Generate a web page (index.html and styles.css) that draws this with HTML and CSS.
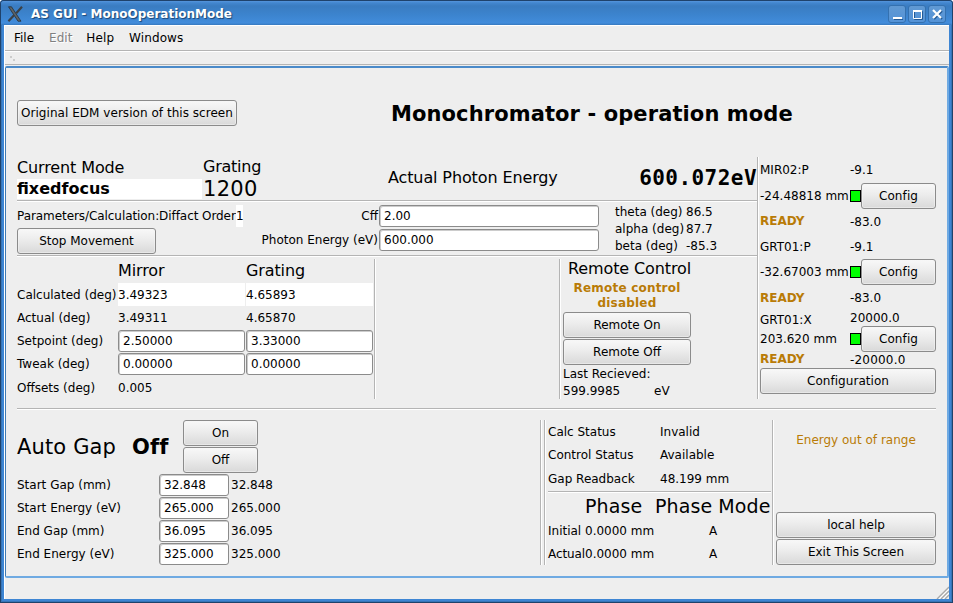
FILE: index.html
```html
<!DOCTYPE html>
<html lang="en">
<head>
<meta charset="utf-8">
<title>AS GUI - MonoOperationMode</title>
<link rel="stylesheet" href="styles.css">
</head>
<body>
<div class="window">
  <header class="titlebar">
    <svg class="logo" viewBox="0 0 16 16"><path d="M1.500 .8 4.500.8 14 15.200 11 15.200Z" fill="#5d6468" stroke="#20272c" stroke-width=".7"/><path d="M15 .8 9.200 7.200M7 9.300 1.400 15.200" stroke="#3c4146" stroke-width="2.200"/></svg>
    <span class="caption">AS GUI - MonoOperationMode</span>
    <div class="winbtns">
      <svg viewBox="1 1 16 16"><path d="M6 14.500h9" stroke="#235a95" stroke-width="1"/><path d="M5 13h9" stroke="#fff" stroke-width="2"/></svg>
      <svg viewBox="1 1 16 16"><path d="M6.500 6.500h8v8h-8z" fill="none" stroke="#235a95"/><path d="M5.500 5.500h8v8h-8z" fill="none" stroke="#fff"/><path d="M5 6h9" stroke="#fff" stroke-width="2"/></svg>
      <svg viewBox="1 1 16 16"><path d="m6 6 8 8m0-8-8 8" stroke="#235a95" stroke-width="2"/><path d="m5 5 8 8m0-8-8 8" stroke="#fff" stroke-width="2.200"/></svg>
    </div>
  </header>
  <div class="client">
    <nav class="menu"><span>File</span><span class="off">Edit</span><span class="help">Help</span><span class="wins">Windows</span></nav>
    <div class="toolbar"><i></i><i></i></div>
    <main class="panel">
      <section class="head">
        <button class="edm">Original EDM version of this screen</button>
        <h1>Monochromator - operation mode</h1>
      </section>
      <section class="upper">
        <div class="left">
          <div class="mode">
            <div class="cur"><span class="mid">Current Mode</span><strong>fixedfocus</strong></div>
            <div class="grat"><span class="mid">Grating</span><span class="big">1200</span></div>
            <span class="mid ape">Actual Photon Energy</span>
            <span class="energy">600.072eV</span>
          </div>
          <hr>
          <div class="params">
            <div class="order">
              <div class="line"><span class="pc">Parameters/Calculation:Diffact Order</span><span class="one">1</span></div>
              <button>Stop Movement</button>
            </div>
            <div class="entry">
              <span>Cff</span><div class="field">2.00</div>
              <span>Photon Energy (eV)</span><div class="field">600.000</div>
            </div>
            <div class="angles">
              <span>theta (deg)</span><span>86.5</span>
              <span>alpha (deg)</span><span>87.7</span>
              <span>beta (deg)</span><span>-85.3</span>
            </div>
          </div>
          <hr>
          <div class="lowerleft">
            <div class="table">
              <span></span><span class="mid">Mirror</span><span class="mid">Grating</span>
              <span>Calculated (deg)</span><span class="white">3.49323</span><span class="white">4.65893</span>
              <span>Actual (deg)</span><span>3.49311</span><span>4.65870</span>
              <span>Setpoint (deg)</span><div class="field">2.50000</div><div class="field">3.33000</div>
              <span>Tweak (deg)</span><div class="field">0.00000</div><div class="field">0.00000</div>
              <span class="offset">Offsets (deg)</span><span class="offset">0.005</span>
            </div>
            <div class="vr"></div>
            <div class="vr second"></div>
            <div class="remote">
              <span class="mid">Remote Control</span>
              <strong class="amber">Remote control<br>disabled</strong>
              <button>Remote On</button>
              <button>Remote Off</button>
              <span class="last">Last Recieved:</span>
              <div class="recv"><span>599.9985</span><span>eV</span></div>
            </div>
          </div>
        </div>
        <div class="vr"></div>
        <div class="motors">
          <div class="motor">
            <span>MIR02:P</span><span>-9.1</span>
            <span>-24.48818 mm</span><div class="cfg"><i></i><button>Config</button></div>
            <strong class="amber">READY</strong><span>-83.0</span>
          </div>
          <div class="motor tight">
            <span>GRT01:P</span><span>-9.1</span>
            <span>-32.67003 mm</span><div class="cfg"><i></i><button>Config</button></div>
            <strong class="amber">READY</strong><span>-83.0</span>
          </div>
          <div class="motor compact">
            <span>GRT01:X</span><span class="lim">20000.0</span>
            <span>203.620 mm</span><div class="cfg"><i></i><button>Config</button></div>
            <strong class="amber">READY</strong><span class="low">-20000.0</span>
          </div>
          <button>Configuration</button>
        </div>
      </section>
      <hr class="divider">
      <section class="bottom">
        <div class="gap">
          <div class="auto">
            <span class="big">Auto Gap</span><strong class="big">Off</strong>
            <div class="onoff"><button>On</button><button>Off</button></div>
          </div>
          <div class="gaps">
            <span>Start Gap (mm)</span><div class="field">32.848</div><span>32.848</span>
            <span>Start Energy (eV)</span><div class="field">265.000</div><span>265.000</span>
            <span>End Gap (mm)</span><div class="field">36.095</div><span>36.095</span>
            <span>End Energy (eV)</span><div class="field">325.000</div><span>325.000</span>
          </div>
        </div>
        <div class="vr"></div>
        <div class="vr"></div>
        <div class="status">
          <div class="calc">
            <span>Calc Status</span><span>Invalid</span>
            <span>Control Status</span><span>Available</span>
            <span>Gap Readback</span><span>48.199 mm</span>
          </div>
          <hr>
          <div class="phase">
            <span></span><span class="ph">Phase</span><span class="ph">Phase Mode</span>
            <span>Initial</span><span>0.0000 mm</span><span class="a">A</span>
            <span class="act">Actual</span><span>0.0000 mm</span><span class="a">A</span>
          </div>
        </div>
        <div class="vr"></div>
        <div class="actions">
          <span class="amber">Energy out of range</span>
          <button>local help</button>
          <button>Exit This Screen</button>
        </div>
      </section>
    </main>
    <footer><svg viewBox="0 0 13 13"><path d="M1 13 13 1M5 13l8-8M9 13l4-4" stroke="#a8a8a8" stroke-width="1.300"/><path d="M3 13 13 3M7 13l6-6" stroke="#fff"/></svg></footer>
  </div>
</div>
</body>
</html>
```
FILE: styles.css
```css
* { box-sizing: border-box; }
body { margin: 0; background: #fff; font: 12px/16px "DejaVu Sans", sans-serif; color: #000; white-space: nowrap; }
.window { width: 953px; height: 603px; display: flex; flex-direction: column; padding: 1px 4px 4px 4px; border-radius: 4px 4px 0 0; background: #3d85d3; box-shadow: inset 0 0 0 1px #1f426b, inset 0 0 0 2px #3775b7; }
.titlebar { height: 24px; margin: 0 -3px; padding: 1px 6px 0 6px; display: flex; align-items: center; background: linear-gradient(#5595dc 0, #4286ce 2px, #3a7cc1 5px, #3c84ce 14px, #428cdb 22px, #3778bd 24px); border-radius: 3px 3px 0 0; }
.logo { width: 16px; height: 16px; margin-right: 8px; }
.caption { font-weight: bold; color: #fff; text-shadow: 1px 1px 1px #1b4473; flex: 1; padding-top: 1px; }
.winbtns { display: flex; gap: 2px; }
.winbtns svg { width: 18px; height: 18px; border: 1px solid #3471b0; border-radius: 3px; background: linear-gradient(#6099d3, #5493d7); }
.client { flex: 1; display: flex; flex-direction: column; background: #eee; border: solid #fff; border-width: 1px 0 0 1px; }
.menu { height: 24px; display: flex; gap: 15px; padding: 3px 0 0 9px; line-height: 18px; }
.help { margin-left: -1px; letter-spacing: .1px; }
.wins { letter-spacing: .1px; }
.off { color: #808080; text-shadow: 1px 1px #fff; }
.toolbar { height: 15px; border-top: 1px solid #b4b4b4; border-bottom: 1px solid #b4b4b4; box-shadow: inset 0 1px #fff; padding: 5px 0 0 5px; display: flex; gap: 1px; }
.toolbar i { width: 2px; height: 2px; background: #ccc; }
.toolbar i + i { margin-top: 3px; }
.panel { height: 512px; border: solid; border-width: 2px 2px 2px 1px; border-color: #4a8ac9 #6faae2 #6faae2 #4079b1; margin-top: 1px; padding: 0 10px 0 11px; border-radius: 2px; }
button { font: inherit; line-height: 16px; height: 26px; padding: 0; border: 1px solid #8b8b8b; border-radius: 3px; background: linear-gradient(#f8f8f8, #ececec 45%, #d9d9d9); box-shadow: inset 0 0 0 1px #f5f5f580; color: #000; text-align: center; }
.field { height: 22px; border: 1px solid #8b8b8b; border-radius: 3px; background: #fff; padding-left: 4px; line-height: 20px; box-shadow: inset 1px 1px #ccc; }
hr { margin: 0; border: 0; height: 2px; background: linear-gradient(#b4b4b4 50%, #fff 50%); }
.vr { width: 2px; background: linear-gradient(90deg, #b4b4b4 50%, #fff 50%); }
.mid { font-size: 16px; letter-spacing: -.12px; }
.big { font-size: 21px; letter-spacing: .15px; }
.amber { color: #b97b06; }
.head { height: 89px; display: flex; align-items: center; }
.edm { width: 220px; margin-right: 154px; letter-spacing: .04px; }
h1 { margin: 0; padding-top: 2px; font-size: 21px; line-height: 26px; letter-spacing: .1px; }
.upper { display: flex; height: 242px; width: 919px; }
.left { width: 740px; }
.mode { height: 43px; display: flex; }
.cur { width: 186px; }
.cur span, .grat span { display: block; height: 22px; line-height: 22px; }
.grat .mid { line-height: 20px; letter-spacing: -.25px; }
.grat .big { line-height: 21px; letter-spacing: .3px; }
.cur strong { display: block; width: 185px; height: 20px; line-height: 19px; font-size: 16px; background: #fff; }
.grat { width: 185px; }
.ape { line-height: 42px; }
.energy { margin-left: auto; font: bold 21px/42px "DejaVu Sans Mono", monospace; letter-spacing: .45px; }
.params { height: 53px; display: flex; padding-top: 3px; }
.order { width: 244px; }
.line { display: flex; line-height: 22px; height: 23px; }
.pc { width: 219px; letter-spacing: -.07px; }
.one { background: #fff; width: 7px; height: 22px; }
.order button { width: 139px; }
.entry { display: grid; grid-template-columns: 118px 220px; grid-auto-rows: 22px; gap: 2px 0; line-height: 22px; width: 354px; text-align: right; }
.entry span { padding-right: 1px; }
.entry .field { text-align: left; }
.angles { display: grid; grid-template-columns: 71px 50px; grid-auto-rows: 17px; line-height: 14px; }
.lowerleft { display: flex; height: 142px; }
.table { width: 356px; display: grid; grid-template-columns: 101px 128px 127px; grid-template-rows: 26px; grid-auto-rows: 23px; line-height: 24px; margin-right: 1px; }
.table .mid { line-height: 28px; }
.table .white { background: #fff; width: 127px; }
.table .field { width: 127px; margin-top: 1px; }
.table .offset { line-height: 27px; }
.lowerleft .vr { margin-top: 2px; }
.second { margin-left: 183px; }
.remote { margin-left: 2px; width: 128px; display: flex; flex-direction: column; }
.remote > * { flex-shrink: 0; }
.remote .mid { height: 23px; line-height: 24px; padding-left: 5px; }
.remote strong { height: 32px; line-height: 15px; padding-top: 1px; text-align: center; letter-spacing: .2px; }
.remote button { margin-bottom: 1px; }
.last { line-height: 17px; }
.recv { display: flex; line-height: 17px; }
.recv span:first-child { width: 91px; }
.motors { width: 177px; padding-left: 1px; }
.motor { display: grid; grid-template-columns: 90px 87px; grid-template-rows: 26px 26px 25px; line-height: 26px; }
.motor .amber { line-height: 25px; }
.tight { grid-template-rows: 25px 26px 26px; }
.tight .amber { line-height: 26px; }
.compact { grid-template-rows: 15px 26px 16px; line-height: 18px; }
.compact .lim { line-height: 15px; }
.compact > span:nth-child(3) { line-height: 26px; }
.compact .amber { line-height: 15px; }
.compact .low { line-height: 17px; letter-spacing: .2px; }
.cfg { display: flex; align-items: center; }
.cfg i { width: 11px; height: 12px; margin-top: -1px; background: #0f0; border: 1px solid #000; }
.cfg button { width: 75px; letter-spacing: .1px; }
.motors > button { width: 176px; letter-spacing: .05px; }
.divider { margin-top: 9px; width: 919px; }
.bottom { display: flex; height: 145px; margin-top: 10px; }
.gap { width: 523px; }
.auto { display: flex; height: 54px; line-height: 54px; }
.auto span { width: 115px; }
.auto strong { width: 51px; letter-spacing: .1px; }
.onoff { display: grid; width: 75px; gap: 1px; grid-auto-rows: 26px; line-height: 16px; }
.gaps { display: grid; grid-template-columns: 142px 70px 60px; grid-auto-rows: 23px; line-height: 22px; }
.gaps span:nth-child(3n) { padding-left: 2px; }
.gap + .vr { margin-right: 2px; }
.status { width: 226px; padding-left: 2px; }
.status hr { margin-right: 1px; }
.calc { display: grid; grid-template-columns: 112px 100px; grid-template-rows: 23px 24px 24px; line-height: 24px; }
.phase { display: grid; grid-template-columns: 37px 70px 116px; grid-template-rows: 27px 23px 23px; line-height: 23px; }
.ph { font-size: 19px; line-height: 27px; letter-spacing: .1px; }
.a { text-align: center; }
.act { letter-spacing: -.1px; }
.actions { width: 162px; padding-left: 2px; display: flex; flex-direction: column; gap: 1px; }
.actions .amber { height: 91px; line-height: 40px; text-align: center; }
footer { flex: 1; display: flex; justify-content: flex-end; align-items: flex-end; }
footer svg { width: 13px; height: 13px; }
```
